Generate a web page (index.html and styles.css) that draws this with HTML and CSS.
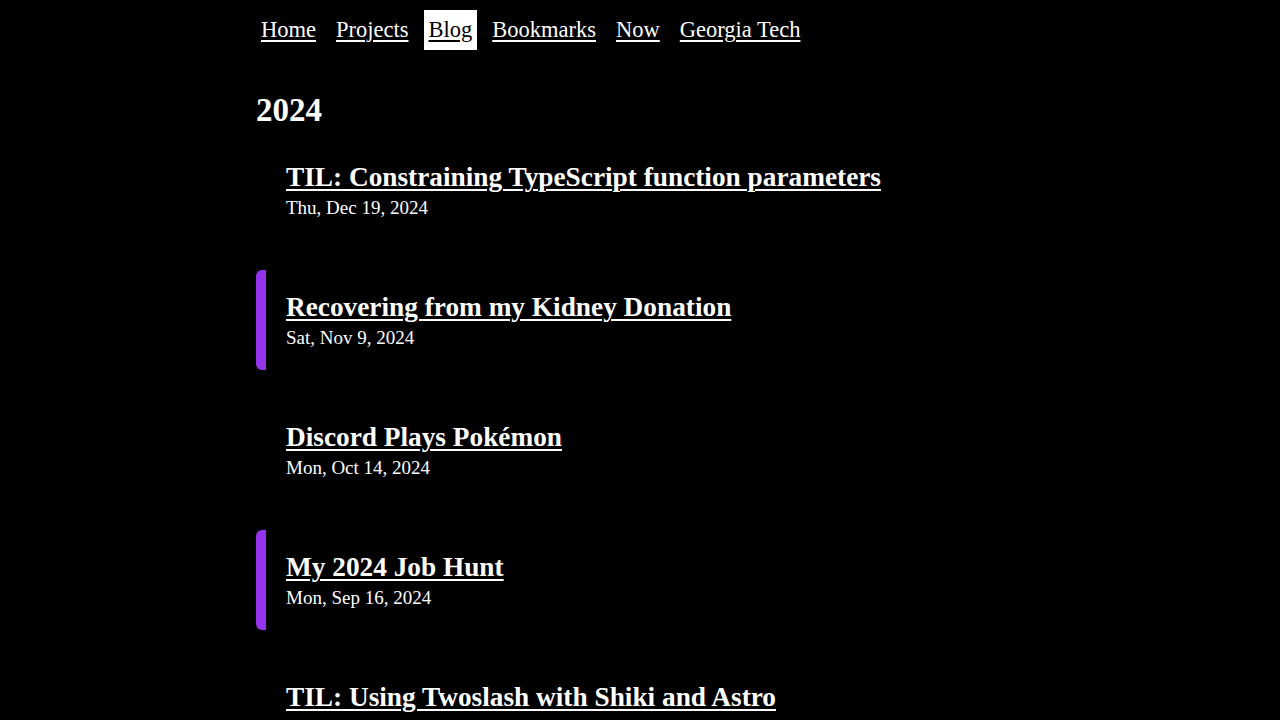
FILE: index.html
```html
<!DOCTYPE html>
<html lang="en">
<head>
<meta charset="utf-8">
<title>Blog</title>
<link rel="stylesheet" href="styles.css">
</head>
<body>
<div class="page">
  <nav class="nav">
    <a href="#" class="nav-link">Home</a>
    <a href="#" class="nav-link">Projects</a>
    <a href="#" class="nav-link active">Blog</a>
    <a href="#" class="nav-link">Bookmarks</a>
    <a href="#" class="nav-link">Now</a>
    <a href="#" class="nav-link">Georgia Tech</a>
  </nav>
  <main>
    <h2 class="year">2024</h2>
    <ul class="posts">
      <li class="post">
        <a href="#" class="post-title">TIL: Constraining TypeScript function parameters</a>
        <div class="post-date">Thu, Dec 19, 2024</div>
      </li>
      <li class="post featured">
        <a href="#" class="post-title">Recovering from my Kidney Donation</a>
        <div class="post-date">Sat, Nov 9, 2024</div>
      </li>
      <li class="post">
        <a href="#" class="post-title">Discord Plays Pokémon</a>
        <div class="post-date">Mon, Oct 14, 2024</div>
      </li>
      <li class="post featured">
        <a href="#" class="post-title">My 2024 Job Hunt</a>
        <div class="post-date">Mon, Sep 16, 2024</div>
      </li>
      <li class="post">
        <a href="#" class="post-title">TIL: Using Twoslash with Shiki and Astro</a>
        <div class="post-date">Sun, Aug 25, 2024</div>
      </li>
    </ul>
  </main>
</div>
</body>
</html>
```
FILE: styles.css
```css
html, body {
  margin: 0;
  padding: 0;
  background: #000;
  color: #fff;
  font-family: "Liberation Serif", "Times New Roman", serif;
}
body {
  overflow: hidden;
  height: 720px;
}
.page {
  width: 768px;
  margin: 0 auto;
}
.nav {
  display: flex;
  gap: 10px;
  padding-top: 10px;
}
.nav-link {
  display: block;
  padding: 5px;
  font-size: 22.5px;
  line-height: 30px;
  color: #fff;
  text-decoration: underline;
  text-decoration-thickness: 1.5px;
  text-underline-offset: 3px;
}
.nav-link.active {
  background: #fff;
  color: #000;
}
.year {
  margin: 40px 0 10px;
  font-size: 33px;
  line-height: 40px;
  font-weight: 700;
}
.posts {
  list-style: none;
  margin: 0;
  padding: 0;
  display: flex;
  flex-direction: column;
  gap: 30px;
}
.post {
  box-sizing: border-box;
  height: 100px;
  padding: 21px 0 0 30px;
}
.post.featured {
  border-left: 10px solid #9333ea;
  border-radius: 6px 0 0 6px;
  padding-left: 20px;
}
.post-title {
  display: block;
  font-size: 27.3px;
  line-height: 33px;
  font-weight: 700;
  color: #fff;
  text-decoration: underline;
  text-decoration-thickness: 2px;
  text-underline-offset: 3px;
  white-space: nowrap;
}
.post-date {
  margin-top: 2px;
  font-size: 19px;
  line-height: 24px;
}
```
